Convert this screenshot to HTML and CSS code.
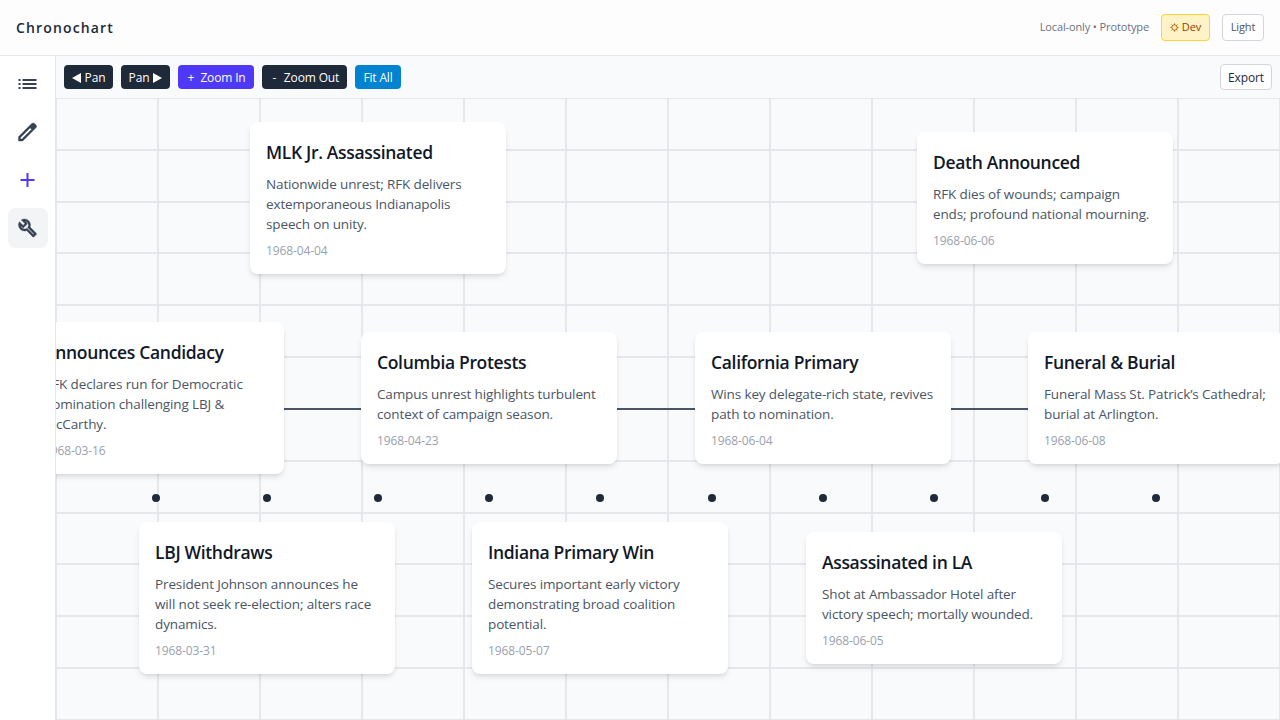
FILE: index.html
```html
<!DOCTYPE html>
<html lang="en">
<head>
<meta charset="utf-8">
<title>Chronochart</title>
<link rel="stylesheet" href="styles.css">
</head>
<body>
<div class="app">
  <header class="header">
    <h1 class="brand">Chronochart</h1>
    <div class="header-right">
      <span class="status">Local-only • Prototype</span>
      <button class="chip chip-dev"><svg class="gear" viewBox="0 0 10 10"><circle cx="5" cy="5" r="3"/><path d="M5 .5v1.5M5 8v1.500M.5 5h1.500M8 5h1.500M1.800 1.800l1 1M7.200 7.200l1 1M8.200 1.800l-1 1M2.800 7.200l-1 1"/></svg><span>Dev</span></button>
      <button class="chip chip-light">Light</button>
    </div>
  </header>
  <div class="body">
    <nav class="sidebar">
      <button class="nav"><svg viewBox="0 -960 960 960"><path d="M280-600v-80h560v80H280Zm0 160v-80h560v80H280Zm0 160v-80h560v80H280ZM120-600v-80h80v80h-80Zm0 160v-80h80v80h-80Zm0 160v-80h80v80h-80Z"/></svg></button>
      <button class="nav nav-bold"><svg viewBox="0 -960 960 960"><path d="M200-200h57l391-391-57-57-391 391v57Zm-80 80v-170l528-527q12-11 26.500-17t30.500-6q16 0 31 6t26 18l55 56q12 11 17.500 26t5.500 30q0 16-5.500 30.500T817-647L290-120H120Zm640-584-56-56 56 56Zm-141 85-28-29 57 57-29-28Z"/></svg></button>
      <button class="nav nav-add"><svg viewBox="0 -960 960 960"><path d="M440-440H200v-80h240v-240h80v240h240v80H520v240h-80v-240Z"/></svg></button>
      <button class="nav nav-bold nav-active"><svg viewBox="0 -960 960 960"><path d="M686-132 444-376q-20 8-40.500 12t-43.500 4q-100 0-170-70t-70-170q0-36 10-68.500t28-61.500l146 146 72-72-146-146q29-18 61.500-28t68.500-10q100 0 170 70t70 170q0 23-4 43.500T584-516l244 242q12 12 12 29t-12 29l-84 84q-12 12-29 12t-29-12Zm29-85 27-27-256-256q18-20 26-46.500t8-53.500q0-60-38.500-104.500T386-758l74 74q12 12 12 28t-12 28L332-500q-12 12-28 12t-28-12l-74-74q9 57 53.500 95.500T360-440q26 0 52-8t47-25l256 256ZM472-488Z"/></svg></button>
    </nav>
    <main class="main">
      <div class="toolbar">
        <button class="btn w49"><i class="tri tri-left"></i><span>Pan</span></button>
        <button class="btn w49"><span>Pan</span><i class="tri tri-right"></i></button>
        <button class="btn btn-in"><span class="sign">+</span><span>Zoom In</span></button>
        <button class="btn btn-out"><span class="sign">-</span><span>Zoom Out</span></button>
        <button class="btn btn-fit">Fit All</button>
        <button class="btn btn-export">Export</button>
      </div>
      <div class="canvas">
        <svg class="grid" viewBox="0 0 1224 622">
          <path d="M0 0v622M102 0v622M204 0v622M306 0v622M408 0v622M510 0v622M612 0v622M714 0v622M816 0v622M918 0v622M1020 0v622M1122 0v622M1224 0v622"/>
          <path d="M0 0h1224M0 52h1224M0 104h1224M0 155h1224M0 207h1224M0 259h1224M0 311h1224M0 363h1224M0 415h1224M0 466h1224M0 518h1224M0 570h1224M0 622h1224"/>
          <path class="axis" d="M0 311h1224"/>
          <g class="dots"><circle cx="100" cy="400" r="4"/><circle cx="211" cy="400" r="4"/><circle cx="322" cy="400" r="4"/><circle cx="433" cy="400" r="4"/><circle cx="544" cy="400" r="4"/><circle cx="656" cy="400" r="4"/><circle cx="767" cy="400" r="4"/><circle cx="878" cy="400" r="4"/><circle cx="989" cy="400" r="4"/><circle cx="1100" cy="400" r="4"/></g>
        </svg>
        <article class="card c1"><h2>Announces Candidacy</h2><p>RFK declares run for Democratic<br>nomination challenging LBJ &amp;<br>McCarthy.</p><time>1968-03-16</time></article>
        <article class="card c2"><h2>LBJ Withdraws</h2><p>President Johnson announces he<br>will not seek re-election; alters race<br>dynamics.</p><time>1968-03-31</time></article>
        <article class="card c3"><h2>MLK Jr. Assassinated</h2><p>Nationwide unrest; RFK delivers<br>extemporaneous Indianapolis<br>speech on unity.</p><time>1968-04-04</time></article>
        <article class="card c4"><h2>Columbia Protests</h2><p>Campus unrest highlights turbulent<br>context of campaign season.</p><time>1968-04-23</time></article>
        <article class="card c5"><h2>Indiana Primary Win</h2><p>Secures important early victory<br>demonstrating broad coalition<br>potential.</p><time>1968-05-07</time></article>
        <article class="card c6"><h2>California Primary</h2><p>Wins key delegate-rich state, revives<br>path to nomination.</p><time>1968-06-04</time></article>
        <article class="card c7"><h2>Assassinated in LA</h2><p>Shot at Ambassador Hotel after<br>victory speech; mortally wounded.</p><time>1968-06-05</time></article>
        <article class="card c8"><h2>Death Announced</h2><p>RFK dies of wounds; campaign<br>ends; profound national mourning.</p><time>1968-06-06</time></article>
        <article class="card c9"><h2>Funeral &amp; Burial</h2><p>Funeral Mass St. Patrick’s Cathedral;<br>burial at Arlington.</p><time>1968-06-08</time></article>
      </div>
    </main>
  </div>
</div>
</body>
</html>
```
FILE: styles.css
```css
* { box-sizing: border-box; margin: 0; padding: 0; }
body { font-family: "Segoe UI", "Open Sans", "Noto Sans", sans-serif; background: #fff; overflow: hidden; }
button { font: inherit; letter-spacing: inherit; border: 0; background: none; white-space: nowrap; }
.app { display: flex; flex-direction: column; width: 1280px; height: 720px; }
.header { flex: none; height: 56px; display: flex; align-items: center; justify-content: space-between; padding: 0 16px; background: #fdfdfd; border-bottom: 1px solid #e5e7eb; }
.brand { font-size: 14px; line-height: 20px; font-weight: 600; letter-spacing: 1.15px; color: #1e2939; }
.header-right { display: flex; align-items: center; gap: 12px; font-size: 11px; letter-spacing: -.13px; }
.status { color: #6a7282; white-space: nowrap; padding-bottom: 2px; }
.chip { height: 27px; display: flex; align-items: center; justify-content: center; gap: 3px; padding-bottom: 2px; border: 1px solid #d1d5dc; border-radius: 4px; background: #fff; color: #4a5565; font-size: 11px; }
.chip-dev { width: 49px; background: #fef3c6; border-color: #ffd230; color: #973c00; }
.chip-light { width: 42px; }
.gear { width: 9px; height: 9px; margin-top: 1px; fill: none; stroke: #bb4d00; stroke-width: 1; }
.body { flex: 1; display: flex; min-height: 0; }
.sidebar { flex: none; width: 56px; display: flex; flex-direction: column; align-items: flex-start; gap: 8px; padding: 8px 0 0 8px; border-right: 1px solid #e5e7eb; background: #fff; }
.nav { flex: none; width: 40px; height: 40px; border-radius: 8px; display: flex; align-items: center; justify-content: center; }
.nav svg { width: 24px; height: 24px; fill: #364153; transform: translateX(-.5px); }
.nav-bold svg { stroke: #364153; stroke-width: 16; }
.nav-add svg { fill: #4f39f6; }
.nav-active { background: #f3f4f6; }
.main { flex: 1; min-width: 0; display: flex; flex-direction: column; background: #f9fafb; }
.toolbar { flex: none; height: 42px; display: flex; align-items: center; gap: 8px; padding: 0 8px; letter-spacing: -.15px; }
.btn { height: 24px; padding-top: 2px; border-radius: 4px; display: flex; align-items: center; justify-content: center; gap: 4px; background: #1e2939; color: #fff; font-size: 12px; line-height: 16px; }
.w49 { width: 49px; }
.btn-in { width: 76px; gap: 5px; background: #4f39f6; }
.btn-out { width: 85px; gap: 5px; }
.sign { width: 9px; text-align: center; }
.btn-fit { width: 46px; background: #0084d1; }
.btn-export { width: 52px; height: 26px; margin-left: auto; background: #fff; border: 1px solid #d1d5dc; color: #1e2939; }
.tri { border: 5px solid transparent; }
.tri-left { border-left: 0; border-right: 9px solid #fff; }
.tri-right { border-right: 0; border-left: 9px solid #fff; }
.canvas { position: relative; flex: 1; overflow: hidden; }
.grid { display: block; width: 1224px; height: 622px; }
.grid path { fill: none; stroke: #e5e7eb; stroke-width: 2; shape-rendering: crispEdges; }
.grid .axis { stroke: #4a5565; }
.dots { fill: #1e2939; }
.card { position: absolute; width: 256px; padding: 16px; border-radius: 8px; background: #fff; box-shadow: 0 4px 6px -1px rgba(0,0,0,.1), 0 2px 4px -2px rgba(0,0,0,.1); white-space: nowrap; }
.card h2 { font-size: 17.5px; line-height: 28px; font-weight: 600; letter-spacing: -.33px; color: #101828; margin-bottom: 8px; }
.card p { font-size: 13.5px; line-height: 20px; letter-spacing: -.13px; color: #4a5565; margin-bottom: 9px; }
.card time { display: block; font-size: 12px; line-height: 16px; letter-spacing: -.1px; color: #99a1af; margin-bottom: -1px; }
.c1 { left: -28px; top: 224px; }
.c2 { left: 83px; top: 424px; }
.c3 { left: 194px; top: 24px; }
.c4 { left: 305px; top: 234px; }
.c5 { left: 416px; top: 424px; }
.c6 { left: 639px; top: 234px; }
.c7 { left: 750px; top: 434px; }
.c8 { left: 861px; top: 34px; }
.c9 { left: 972px; top: 234px; }
```
